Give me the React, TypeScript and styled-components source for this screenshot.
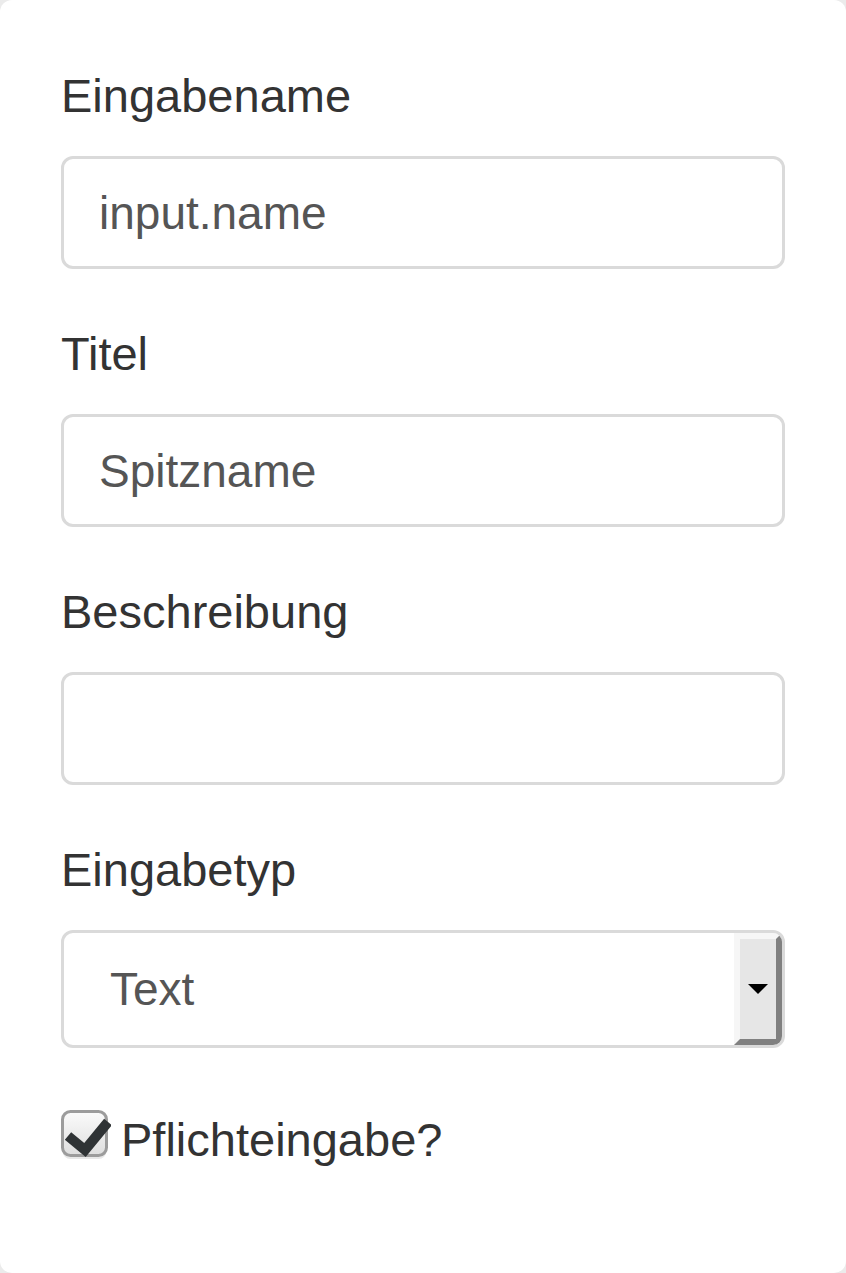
import React from 'react';
import styled, { createGlobalStyle } from 'styled-components';

const GlobalStyle = createGlobalStyle`
  html, body {
    margin: 0;
    padding: 0;
    background: #ebebeb;
  }
  * {
    box-sizing: border-box;
  }
`

const Panel = styled.div`
  width: 846px;
  min-height: 1273px;
  background: #fff;
  border-radius: 12px;
  padding: 67px 61px 0;
  font-family: "Liberation Sans", Arial, sans-serif;
`

const FormGroup = styled.div`
  margin-bottom: 56px;
`

const Label = styled.label`
  display: block;
  font-size: 47px;
  line-height: 58px;
  color: #333;
  margin-bottom: 31px;
`

const TextInput = styled.input`
  display: block;
  width: 100%;
  height: 113px;
  margin: 0;
  padding: 0 35px;
  border: 3px solid #dadada;
  border-radius: 12px;
  font-family: inherit;
  font-size: 46px;
  color: #555;
  background: #fff;
  outline: none;
`

const SelectBox = styled.div`
  display: flex;
  height: 118px;
  border: 3px solid #dadada;
  border-radius: 12px;
  overflow: hidden;
  background: #fff;
`

const SelectValue = styled.div`
  flex: 1;
  display: flex;
  align-items: center;
  padding-left: 46px;
  font-size: 46px;
  color: #555;
`

const SelectButton = styled.div`
  width: 48px;
  display: flex;
  align-items: center;
  justify-content: center;
  background: #e6e6e6;
  border-style: solid;
  border-width: 6px;
  border-color: #f6f6f6 #808080 #808080 #f6f6f6;
`

const CheckRow = styled.label`
  display: flex;
  align-items: flex-start;
  gap: 10px;
  padding-top: 7px;
  font-size: 47px;
  line-height: 58px;
  color: #333;
`

const CheckBoxIcon = styled.svg`
  flex: none;
  margin-top: -1px;
`

const Arrow = () => (
  <svg width="22" height="12" viewBox="0 0 22 12">
    <path d="M1 1 L21 1 L11 11 Z" fill="#000" />
  </svg>
)

const CheckMark = () => (
  <CheckBoxIcon width="50" height="52" viewBox="0 0 50 52">
    <defs>
      <linearGradient id="cbg" x1="0" y1="0" x2="0" y2="1">
        <stop offset="0" stopColor="#fbfbfb" />
        <stop offset="1" stopColor="#dedede" />
      </linearGradient>
    </defs>
    <rect x="1.5" y="3" width="44" height="46" rx="8" fill="#e8e8e8" />
    <rect x="1.5" y="1.5" width="44" height="44" rx="8" fill="url(#cbg)" stroke="#9c9c9c" strokeWidth="3" />
    <path d="M7 26 L24 40 L47 12" fill="none" stroke="#2f3335" strokeWidth="10" strokeLinejoin="miter" />
  </CheckBoxIcon>
)

const App: React.FunctionComponent = () => {
  return <>
    <GlobalStyle />
    <Panel>
      <FormGroup>
        <Label>Eingabename</Label>
        <TextInput defaultValue="input.name" />
      </FormGroup>
      <FormGroup>
        <Label>Titel</Label>
        <TextInput defaultValue="Spitzname" />
      </FormGroup>
      <FormGroup>
        <Label>Beschreibung</Label>
        <TextInput defaultValue="" />
      </FormGroup>
      <FormGroup>
        <Label>Eingabetyp</Label>
        <SelectBox>
          <SelectValue>Text</SelectValue>
          <SelectButton><Arrow /></SelectButton>
        </SelectBox>
      </FormGroup>
      <CheckRow>
        <CheckMark />
        <span>Pflichteingabe?</span>
      </CheckRow>
    </Panel>
  </>;
}

export default App;
